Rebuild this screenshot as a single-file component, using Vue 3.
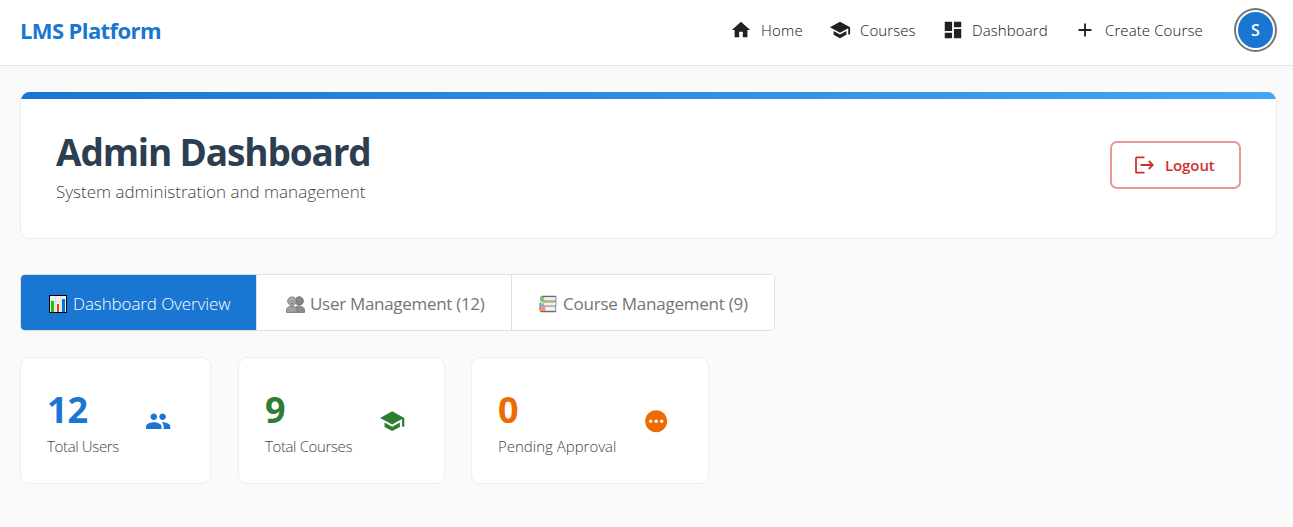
<script setup>
const SCHOOL = 'M5 13.18v4L12 21l7-3.82v-4L12 17l-7-3.82zM12 3 1 9l11 6 9-4.91V17h2V9L12 3z'
const nav = [
  { key: 'home', label: 'Home', path: 'M10 20v-6h4v6h5v-8h3L12 3 2 12h3v8z' },
  { key: 'courses', label: 'Courses', path: SCHOOL },
  { key: 'dashboard', label: 'Dashboard', path: 'M3 13h8V3H3v10zm0 8h8v-6H3v6zm10 0h8V11h-8v10zm0-18v6h8V3h-8z' },
  { key: 'create', label: 'Create Course', path: 'M19 13h-6v6h-2v-6H5v-2h6V5h2v6h6v2z' },
]
const stats = [
  { key: 'users', value: '12', label: 'Total Users', path: 'M16 11c1.66 0 2.99-1.34 2.99-3S17.66 5 16 5c-1.66 0-3 1.34-3 3s1.34 3 3 3zm-8 0c1.66 0 2.99-1.34 2.99-3S9.66 5 8 5C6.34 5 5 6.34 5 8s1.34 3 3 3zm0 2c-2.33 0-7 1.17-7 3.5V19h14v-2.5c0-2.33-4.67-3.5-7-3.5zm8 0c-.29 0-.62.02-.97.05 1.16.84 1.97 1.97 1.97 3.45V19h6v-2.5c0-2.33-4.67-3.5-7-3.5z' },
  { key: 'total', value: '9', label: 'Total Courses', path: SCHOOL },
  { key: 'pending', value: '0', label: 'Pending Approval', path: 'M12 2C6.48 2 2 6.48 2 12s4.48 10 10 10 10-4.48 10-10S17.52 2 12 2zM7 13.5c-.83 0-1.5-.67-1.5-1.5s.67-1.5 1.5-1.5 1.5.67 1.5 1.5-.67 1.5-1.5 1.5zm5 0c-.83 0-1.5-.67-1.5-1.5s.67-1.5 1.5-1.5 1.5.67 1.5 1.5-.67 1.5-1.5 1.5zm5 0c-.83 0-1.5-.67-1.5-1.5s.67-1.5 1.5-1.5 1.5.67 1.5 1.5-.67 1.5-1.5 1.5z' },
]
</script>

<template>
  <div class="page">
    <header class="topbar">
      <div class="brand">LMS Platform</div>
      <nav class="nav">
        <a v-for="n in nav" :key="n.key" class="nav-item" :class="n.key">
          <svg viewBox="0 0 24 24"><path :d="n.path" /></svg><span>{{ n.label }}</span>
        </a>
      </nav>
      <div class="avatar"><div class="avatar-face">S</div></div>
    </header>

    <main class="main">
      <section class="hero">
        <div class="stripe"></div>
        <div class="hero-body">
          <div>
            <h1>Admin Dashboard</h1>
            <p>System administration and management</p>
          </div>
          <button class="logout">
            <svg viewBox="0 0 20 18" fill="none" stroke="currentColor" stroke-width="1.8">
              <path d="M10.5 1.4H2.6Q2 1.4 2 2V16Q2 16.6 2.6 16.6H10.5M6.6 9H18.4M14.8 5 18.8 9l-4 4" />
            </svg>
            <span>Logout</span>
          </button>
        </div>
      </section>

      <div class="tabs">
        <button class="tab overview">
          <svg viewBox="0 0 18 18">
            <rect width="18" height="18" fill="#000" /><rect x="1" y="1" width="16" height="16" fill="#f1f1f1" />
            <path d="M1 6.5h16M1 12h16M6.5 1v16M12 1v16" stroke="#dedede" />
            <rect x="2" y="6" width="3" height="11" fill="#16c60c" />
            <rect x="8" y="9" width="2" height="8" fill="#f03a17" />
            <rect x="13" y="4" width="3" height="13" fill="#0078d7" />
          </svg>
          <span>Dashboard Overview</span>
        </button>
        <button class="tab users-tab">
          <svg viewBox="0 0 19 17">
            <path d="M8 16.4v-2.4q0-3.8 5-3.8t5.5 3.8v2.4z" fill="#8c8c8c" stroke="#707070" stroke-width=".8" />
            <circle cx="13.2" cy="5" r="4.2" fill="#898989" stroke="#6b6b6b" stroke-width=".9" />
            <path d="M.5 16.4v-2.2q0-3.8 5-3.8t5.4 3.8v2.2z" fill="#a0a0a0" stroke="#777" stroke-width=".9" />
            <circle cx="6" cy="5.2" r="4.3" fill="#aaa" stroke="#777" stroke-width=".9" />
            <path d="M4 5.6h1M7 5.6h1M11.5 5.6h1M15 5.6h1M5 7.6h2" stroke="#666" stroke-width=".8" />
          </svg>
          <span>User Management (12)</span>
        </button>
        <button class="tab courses-tab">
          <svg viewBox="0 0 18 17">
            <path d="M2.5 1H17M2.5 5.5H17M1 10.4H17M1.5 16H17" stroke="#6c6c6c" stroke-width="1.3" />
            <path d="M2 1.6h3.5v4H2z" fill="#70d66b" /><path d="M5.5 1.7H16v3.2H5.5z" fill="#eee" />
            <path d="M2.8 6H16v1.6H4z" fill="#cfc778" /><path d="M1 7.8h4V11H1z" fill="#7bb5df" /><path d="M5 7.7h11v2.2H5z" fill="#eee" />
            <path d="M1 11h6v4.5H1z" fill="#ff9165" /><path d="M6.5 11.4H16v3.4H6z" fill="#f3f3f3" />
            <path d="M2 1Q.7 3.2 2.2 5.5M1.8 6Q0 8.5 1 10.5 0 13.5 1.5 16M17 1v4M17 6v4M16.6 11v5" fill="none" stroke="#737373" stroke-width=".8" />
          </svg>
          <span>Course Management (9)</span>
        </button>
      </div>

      <div class="stats">
        <article v-for="s in stats" :key="s.key" class="card" :class="s.key">
          <div class="figures">
            <strong>{{ s.value }}</strong>
            <span>{{ s.label }}</span>
          </div>
          <svg viewBox="0 0 24 24"><path :d="s.path" /></svg>
        </article>
      </div>
    </main>
  </div>
</template>

<style>
body { background: #fafafa; }
</style>

<style scoped>
* { box-sizing: border-box; }
.page { height: 527px; overflow: hidden; background: #fafafa; font-family: "Open Sans", "Noto Sans", sans-serif; font-weight: 300; color: #212121; white-space: nowrap; }
svg { display: block; flex: none; fill: currentColor; }
.topbar { height: 66px; background: #fff; border-bottom: 1px solid #e6e6e6; padding: 0 16px 5px 20px; display: flex; align-items: center; }
.brand { flex: 1; font-size: 22px; font-weight: 700; color: #1976d2; letter-spacing: -.6px; }
.nav { display: flex; }
.nav-item { display: flex; align-items: center; font-size: 15px; font-weight: 300; color: #111; }
.nav-item svg { width: 22px; height: 22px; margin-right: 9px; color: #212121; }
.nav-item span { padding-bottom: 1px; }
.home { width: 99px; letter-spacing: .2px; }
.courses { width: 113px; letter-spacing: .1px; }
.dashboard { width: 132px; letter-spacing: .1px; }
.dashboard svg { margin-right: 8px; }
.create { width: 160px; letter-spacing: .1px; }
.avatar { width: 43px; height: 44px; border: 2px solid #757575; border-radius: 50%; padding: 2px; }
.avatar-face { width: 35px; height: 36px; border-radius: 50%; background: #1976d2; color: #fff; font-size: 16px; font-weight: 600; display: flex; align-items: center; justify-content: center; }
.main { padding: 26px 16px 0 20px; }
.hero { height: 147px; background: #fff; border: 1px solid #ececec; border-top: 0; border-radius: 9px; overflow: hidden; }
.stripe { height: 7px; background: linear-gradient(90deg, #1976d2, #42a5f5); }
.hero-body { display: flex; justify-content: space-between; align-items: flex-start; padding: 28px 35px 0; }
h1 { margin: 0; font-size: 37px; line-height: 50px; font-weight: 700; color: #2c3e50; letter-spacing: -1.15px; }
p { margin: 3px 0 0; font-size: 17px; line-height: 24px; color: #444; }
button { font-family: inherit; margin: 0; }
.logout { display: flex; align-items: center; width: 131px; height: 48px; margin-top: 14px; padding: 0 0 0 22px; background: #fff; border: 2px solid #ea9696; border-radius: 7px; color: #d32f2f; font-size: 15px; font-weight: 600; letter-spacing: -.1px; }
.logout svg { width: 20px; height: 18px; margin-right: 11px; fill: none; }
.tabs { display: flex; width: 755px; height: 57px; margin-top: 35px; border: 1px solid #e0e0e0; border-radius: 5px; background: #fff; overflow: hidden; }
.tab { display: flex; align-items: center; padding: 3px 0 0 27px; border: 0; border-right: 1px solid #e0e0e0; background: #fff; color: #757575; font-size: 17px; font-weight: 400; }
.tab:last-child { border-right: 0; }
.tab svg { height: 18px; width: 18px; margin-right: 6px; }
.tab span { padding-bottom: 1px; }
.overview { width: 236px; padding-left: 28px; background: #1976d2; color: #fff; font-weight: 300; letter-spacing: -.1px; }
.users-tab { width: 255px; padding-left: 29px; letter-spacing: -.3px; }
.users-tab svg { width: 19px; height: 17px; margin-right: 5px; }
.courses-tab { width: 262px; letter-spacing: -.23px; }
.stats { display: flex; margin-top: 26px; }
.card { height: 127px; background: #fff; border: 1px solid #eee; border-radius: 9px; padding: 28px 0 0 26px; display: flex; }
.card svg { width: 26.4px; height: 26.4px; margin-top: 22px; }
.figures { display: flex; flex-direction: column; }
.figures strong { font-size: 36px; line-height: 48px; font-weight: 700; }
.figures span { font-size: 15px; line-height: 22px; margin-top: 1px; color: #444; }
.users { width: 191px; margin-right: 27px; }
.users .figures { width: 98px; }
.users .figures span { letter-spacing: -.35px; }
.users strong, .users svg { color: #1976d2; }
.total { width: 207px; margin-right: 26px; }
.total .figures { width: 114px; }
.total .figures span { letter-spacing: -.38px; }
.total strong, .total svg { color: #2e7d32; }
.pending { width: 238px; }
.pending .figures { width: 145px; }
.pending strong, .pending svg { color: #ed6c02; }
</style>
